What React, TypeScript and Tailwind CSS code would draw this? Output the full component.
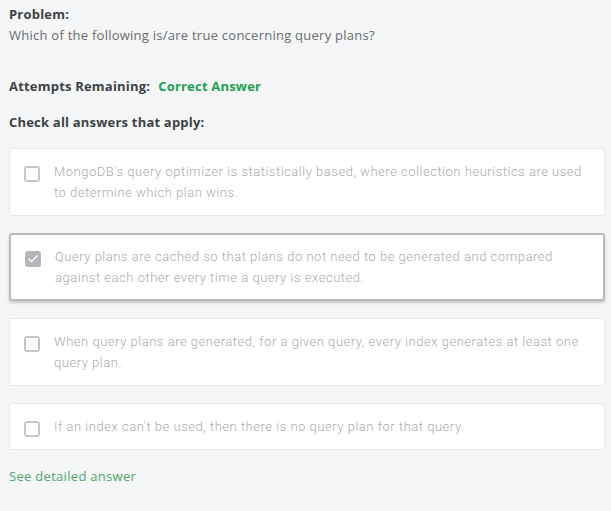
// App.tsx - quiz question with multiple-answer checkboxes
import { Check } from "lucide-react";

type Answer = {
  id: number;
  text: string;
  checked: boolean;
};

const answers: Answer[] = [
  {
    id: 1,
    text: "MongoDB's query optimizer is statistically based, where collection heuristics are used to determine which plan wins.",
    checked: false,
  },
  {
    id: 2,
    text: "Query plans are cached so that plans do not need to be generated and compared against each other every time a query is executed.",
    checked: true,
  },
  {
    id: 3,
    text: "When query plans are generated, for a given query, every index generates at least one query plan.",
    checked: false,
  },
  {
    id: 4,
    text: "If an index can't be used, then there is no query plan for that query.",
    checked: false,
  },
];

const AnswerCard = ({ answer }: { answer: Answer }) => (
  <div
    className={`flex items-start gap-[14px] rounded-[3px] bg-white pl-[14px] pr-[14px] ${
      answer.checked
        ? "border-2 border-[#b7bbbf] py-[11px] shadow-[0_2px_3px_rgba(0,0,0,0.18)]"
        : "border border-[#e6e8ea] py-[12px]"
    }`}
  >
    {answer.checked ? (
      <span className="mt-[5px] flex h-4 w-4 shrink-0 items-center justify-center rounded-[3px] bg-[#b3b6ba]">
        <Check size={12} strokeWidth={3} className="text-white" />
      </span>
    ) : (
      <span className="mt-[5px] h-4 w-4 shrink-0 rounded-[3px] border-2 border-[#c4c6c8] bg-white" />
    )}
    <p className="font-['Roboto',sans-serif] text-[13px] font-light leading-[21px] tracking-[0.52px] text-[#a9abae]">
      {answer.text}
    </p>
  </div>
);

export default function App() {
  return (
    <div className="min-h-[511px] bg-[#f5f6f7] pl-[9px] pr-[6px] pt-[4px] font-['Open_Sans',sans-serif] text-[13px] leading-[21px]">
      {/* Problem */}
      <div>
        <h2 className="font-bold tracking-[0.2px] text-[#3e4144]">Problem:</h2>
        <p className="tracking-[0.25px] text-[#6a6d70]">Which of the following is/are true concerning query plans?</p>
      </div>

      {/* Status */}
      <div className="mt-[30px] flex gap-[8px] font-bold tracking-[0.2px]">
        <span className="text-[#3e4144]">Attempts Remaining:</span>
        <span className="text-[#22a052]">Correct Answer</span>
      </div>

      <h3 className="mt-[15px] font-bold tracking-[0.2px] text-[#3e4144]">Check all answers that apply:</h3>

      {/* Answers */}
      <div className="mt-[15px] flex flex-col gap-[17px]">
        {answers.map((a) => (
          <AnswerCard key={a.id} answer={a} />
        ))}
      </div>

      <a className="mt-[16px] block tracking-[0.3px] text-[#4fa56d]">See detailed answer</a>
    </div>
  );
}
